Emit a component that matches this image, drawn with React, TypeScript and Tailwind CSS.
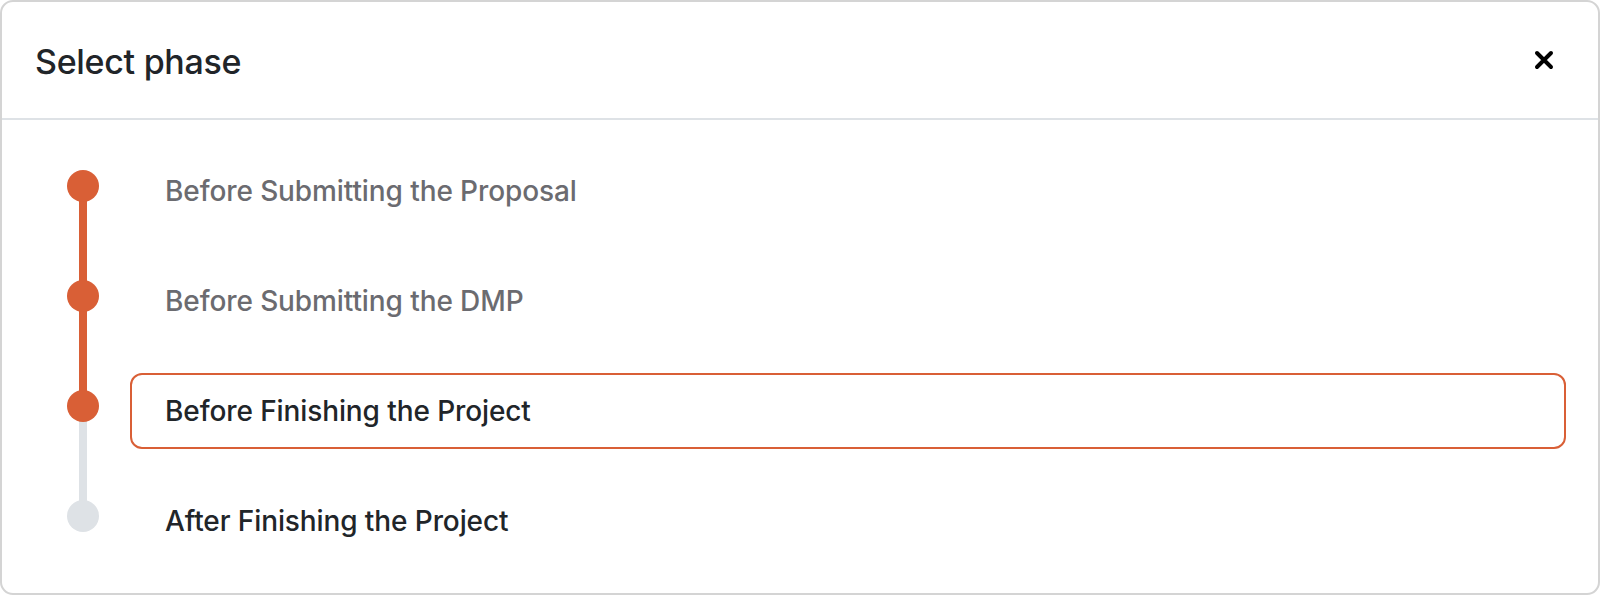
import React from "react";

const phases = [
  { label: "Before Submitting the Proposal", done: true, current: false },
  { label: "Before Submitting the DMP", done: true, current: false },
  { label: "Before Finishing the Project", done: true, current: true },
  { label: "After Finishing the Project", done: false, current: false },
];

export default function App() {
  return (
    <div
      className="w-[1600px] h-[595px] bg-white"
      style={{ fontFamily: "Inter, 'Noto Sans', 'Liberation Sans', sans-serif" }}
    >
      <div className="w-full h-full border-2 border-[#d4d4d4] rounded-[13px] flex flex-col overflow-hidden">
        <div className="h-[118px] border-b-2 border-[#dee2e6] flex items-center justify-between pl-[33px] pr-[44px] shrink-0">
          <h1 className="text-[34px] font-medium text-[#212529] tracking-[-0.3px] mt-[2px]">Select phase</h1>
          <button className="w-[20px] h-[20px] flex items-center justify-center">
            <svg width="20" height="20" viewBox="0 0 20 20">
              <path
                d="M3 3 L17 17 M17 3 L3 17"
                stroke="#000"
                strokeWidth="4"
                strokeLinecap="round"
              />
            </svg>
          </button>
        </div>
        <div className="flex flex-col gap-[34px] pt-[33px] pl-[65px] pr-[32px]">
          {phases.map((p, i) => {
            const next = phases[i + 1];
            return (
              <div key={p.label} className="flex items-start h-[76px]">
                <div className="relative w-[32px] h-[32px] shrink-0 mt-[17px]">
                  {next && (
                    <div
                      className={`absolute left-[12px] top-[16px] w-[8px] h-[110px] ${
                        next.done ? "bg-[#d95f36]" : "bg-[#dee2e6]"
                      }`}
                    />
                  )}
                  <div
                    className={`relative w-[32px] h-[32px] rounded-full ${
                      p.done ? "bg-[#d95f36]" : "bg-[#dee2e6]"
                    }`}
                  />
                </div>
                <div
                  className={`ml-[31px] flex-1 h-full flex items-center pl-[33px] rounded-[12px] border-2 ${
                    p.current ? "border-[#d95f36]" : "border-transparent"
                  }`}
                >
                  <span
                    className={`text-[28px] font-medium tracking-[-0.1px] ${
                      p.done && !p.current ? "text-[#6b6b70]" : "text-[#212529]"
                    }`}
                  >
                    {p.label}
                  </span>
                </div>
              </div>
            );
          })}
        </div>
      </div>
    </div>
  );
}
